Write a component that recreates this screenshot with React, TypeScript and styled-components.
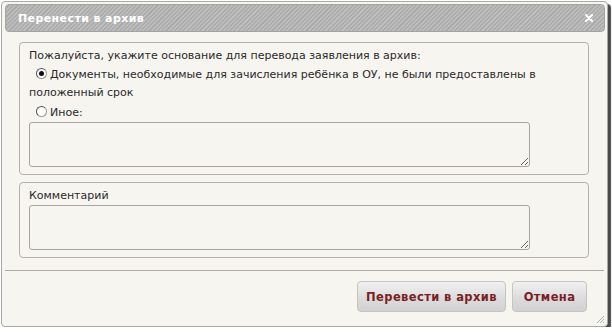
import React from "react";
import styled, { createGlobalStyle } from "styled-components";

const GlobalStyle = createGlobalStyle`
  html, body {
    margin: 0;
    padding: 0;
    background: #ffffff;
  }
  body {
    font-family: "DejaVu Sans", Verdana, sans-serif;
    font-size: 11px;
    color: #2a2a2a;
  }
`;

const Page = styled.div`
  padding: 1px 0 0 1px;
`;

const Dialog = styled.div`
  position: relative;
  box-sizing: border-box;
  width: 607px;
  height: 326px;
  border: 1px solid #a9a9a9;
  border-radius: 4px;
  background: #f7f5f0;
  padding: 2px;
  display: flex;
  flex-direction: column;
  box-shadow: 3px 3px 1px #4a4a4a;
`;

const TitleBar = styled.div`
  height: 28px;
  margin: 0 0 0 1px;
  border-radius: 4px;
  border: 1px solid #a3a3a3;
  box-sizing: border-box;
  background: repeating-linear-gradient(
    -45deg,
    #acacac 0px,
    #acacac 1.5px,
    #bdbdbd 1.5px,
    #bdbdbd 3px
  );
  display: flex;
  align-items: center;
  justify-content: space-between;
  padding: 0 9px 0 12px;
`;

const Title = styled.span`
  color: #ffffff;
  font-weight: bold;
  font-size: 11px;
  letter-spacing: 0.4px;
`;

const CloseButton = styled.button`
  border: 0;
  background: none;
  padding: 0;
  width: 12px;
  height: 12px;
  display: flex;
  align-items: center;
  justify-content: center;
  cursor: pointer;
`;

const Content = styled.div`
  padding: 10px 16px 12px 15px;
  display: flex;
  flex-direction: column;
  gap: 7px;
`;

const Group = styled.fieldset<{ $height: number }>`
  margin: 0;
  box-sizing: border-box;
  height: ${(p) => p.$height}px;
  border: 1px solid #b4b1a9;
  border-radius: 4px;
  padding: 6px 9px 0 9px;
  display: flex;
  flex-direction: column;
  align-items: flex-start;
`;

const Label = styled.div`
  line-height: 13px;
  margin-bottom: 3px;
`;

const RadioRow = styled.label<{ $gap: number }>`
  display: block;
  line-height: 18px;
  text-indent: 6px;
  margin-top: ${(p) => p.$gap}px;
`;

const Radio = styled.input`
  appearance: none;
  box-sizing: border-box;
  width: 11px;
  height: 11px;
  margin: 0 3px 0 1px;
  border-radius: 50%;
  border: 1px solid #9a9a9a;
  border-top-color: #555;
  border-left-color: #555;
  background: #ffffff;
  vertical-align: -1px;
  position: relative;

  &:checked::after {
    content: "";
    position: absolute;
    left: 2px;
    top: 2px;
    width: 5px;
    height: 5px;
    border-radius: 50%;
    background: #111;
  }
`;

const TextArea = styled.textarea`
  box-sizing: border-box;
  width: 501px;
  height: 45px;
  margin: 0;
  border: 1px solid #a8a59e;
  border-radius: 3px;
  background: #f7f5f0;
  font-family: "DejaVu Sans", Verdana, sans-serif;
  font-size: 11px;
  resize: both;
`;

const Separator = styled.div`
  height: 1px;
  margin: 0 1px;
  background: #aeaba4;
`;

const ButtonPane = styled.div`
  display: flex;
  justify-content: flex-end;
  gap: 6px;
  padding: 10px 18px 0 0;
`;

const Button = styled.button<{ $width: number }>`
  box-sizing: border-box;
  width: ${(p) => p.$width}px;
  height: 31px;
  border: 1px solid #c4c4c4;
  border-radius: 4px;
  background: linear-gradient(#f1f1f1, #dcdcdc 55%, #d2d2d2);
  color: #7a1f26;
  font-family: "DejaVu Sans", Verdana, sans-serif;
  font-weight: bold;
  font-size: 11.5px;
  letter-spacing: 0.4px;
  cursor: pointer;
`;

const Grip = styled.svg`
  position: absolute;
  right: 2px;
  bottom: 2px;
`;

export default function App() {
  return (
    <Page>
      <GlobalStyle />
      <Dialog>
        <TitleBar>
          <Title>Перенести в архив</Title>
          <CloseButton aria-label="Закрыть">
            <svg width="8" height="8" viewBox="0 0 8 8">
              <path
                d="M1 1 L7 7 M7 1 L1 7"
                stroke="#ffffff"
                strokeWidth="2.2"
                strokeLinecap="round"
              />
            </svg>
          </CloseButton>
        </TitleBar>
        <Content>
          <Group $height={133}>
            <Label>
              Пожалуйста, укажите основание для перевода заявления в архив:
            </Label>
            <RadioRow $gap={1}>
              <Radio type="radio" name="reason" defaultChecked />
              Документы, необходимые для зачисления ребёнка в ОУ, не были
              предоставлены в положенный срок
            </RadioRow>
            <RadioRow $gap={2}>
              <Radio type="radio" name="reason" />
              Иное:
            </RadioRow>
            <TextArea />
          </Group>
          <Group $height={76}>
            <Label>Комментарий</Label>
            <TextArea />
          </Group>
        </Content>
        <Separator />
        <ButtonPane>
          <Button $width={149}>Перевести в архив</Button>
          <Button $width={75}>Отмена</Button>
        </ButtonPane>
        <Grip width="10" height="10" viewBox="0 0 10 10">
          <path
            d="M9 2 L2 9 M9 5 L5 9 M9 8 L8 9"
            stroke="#b0b0b0"
            strokeWidth="1"
          />
        </Grip>
      </Dialog>
    </Page>
  );
}
